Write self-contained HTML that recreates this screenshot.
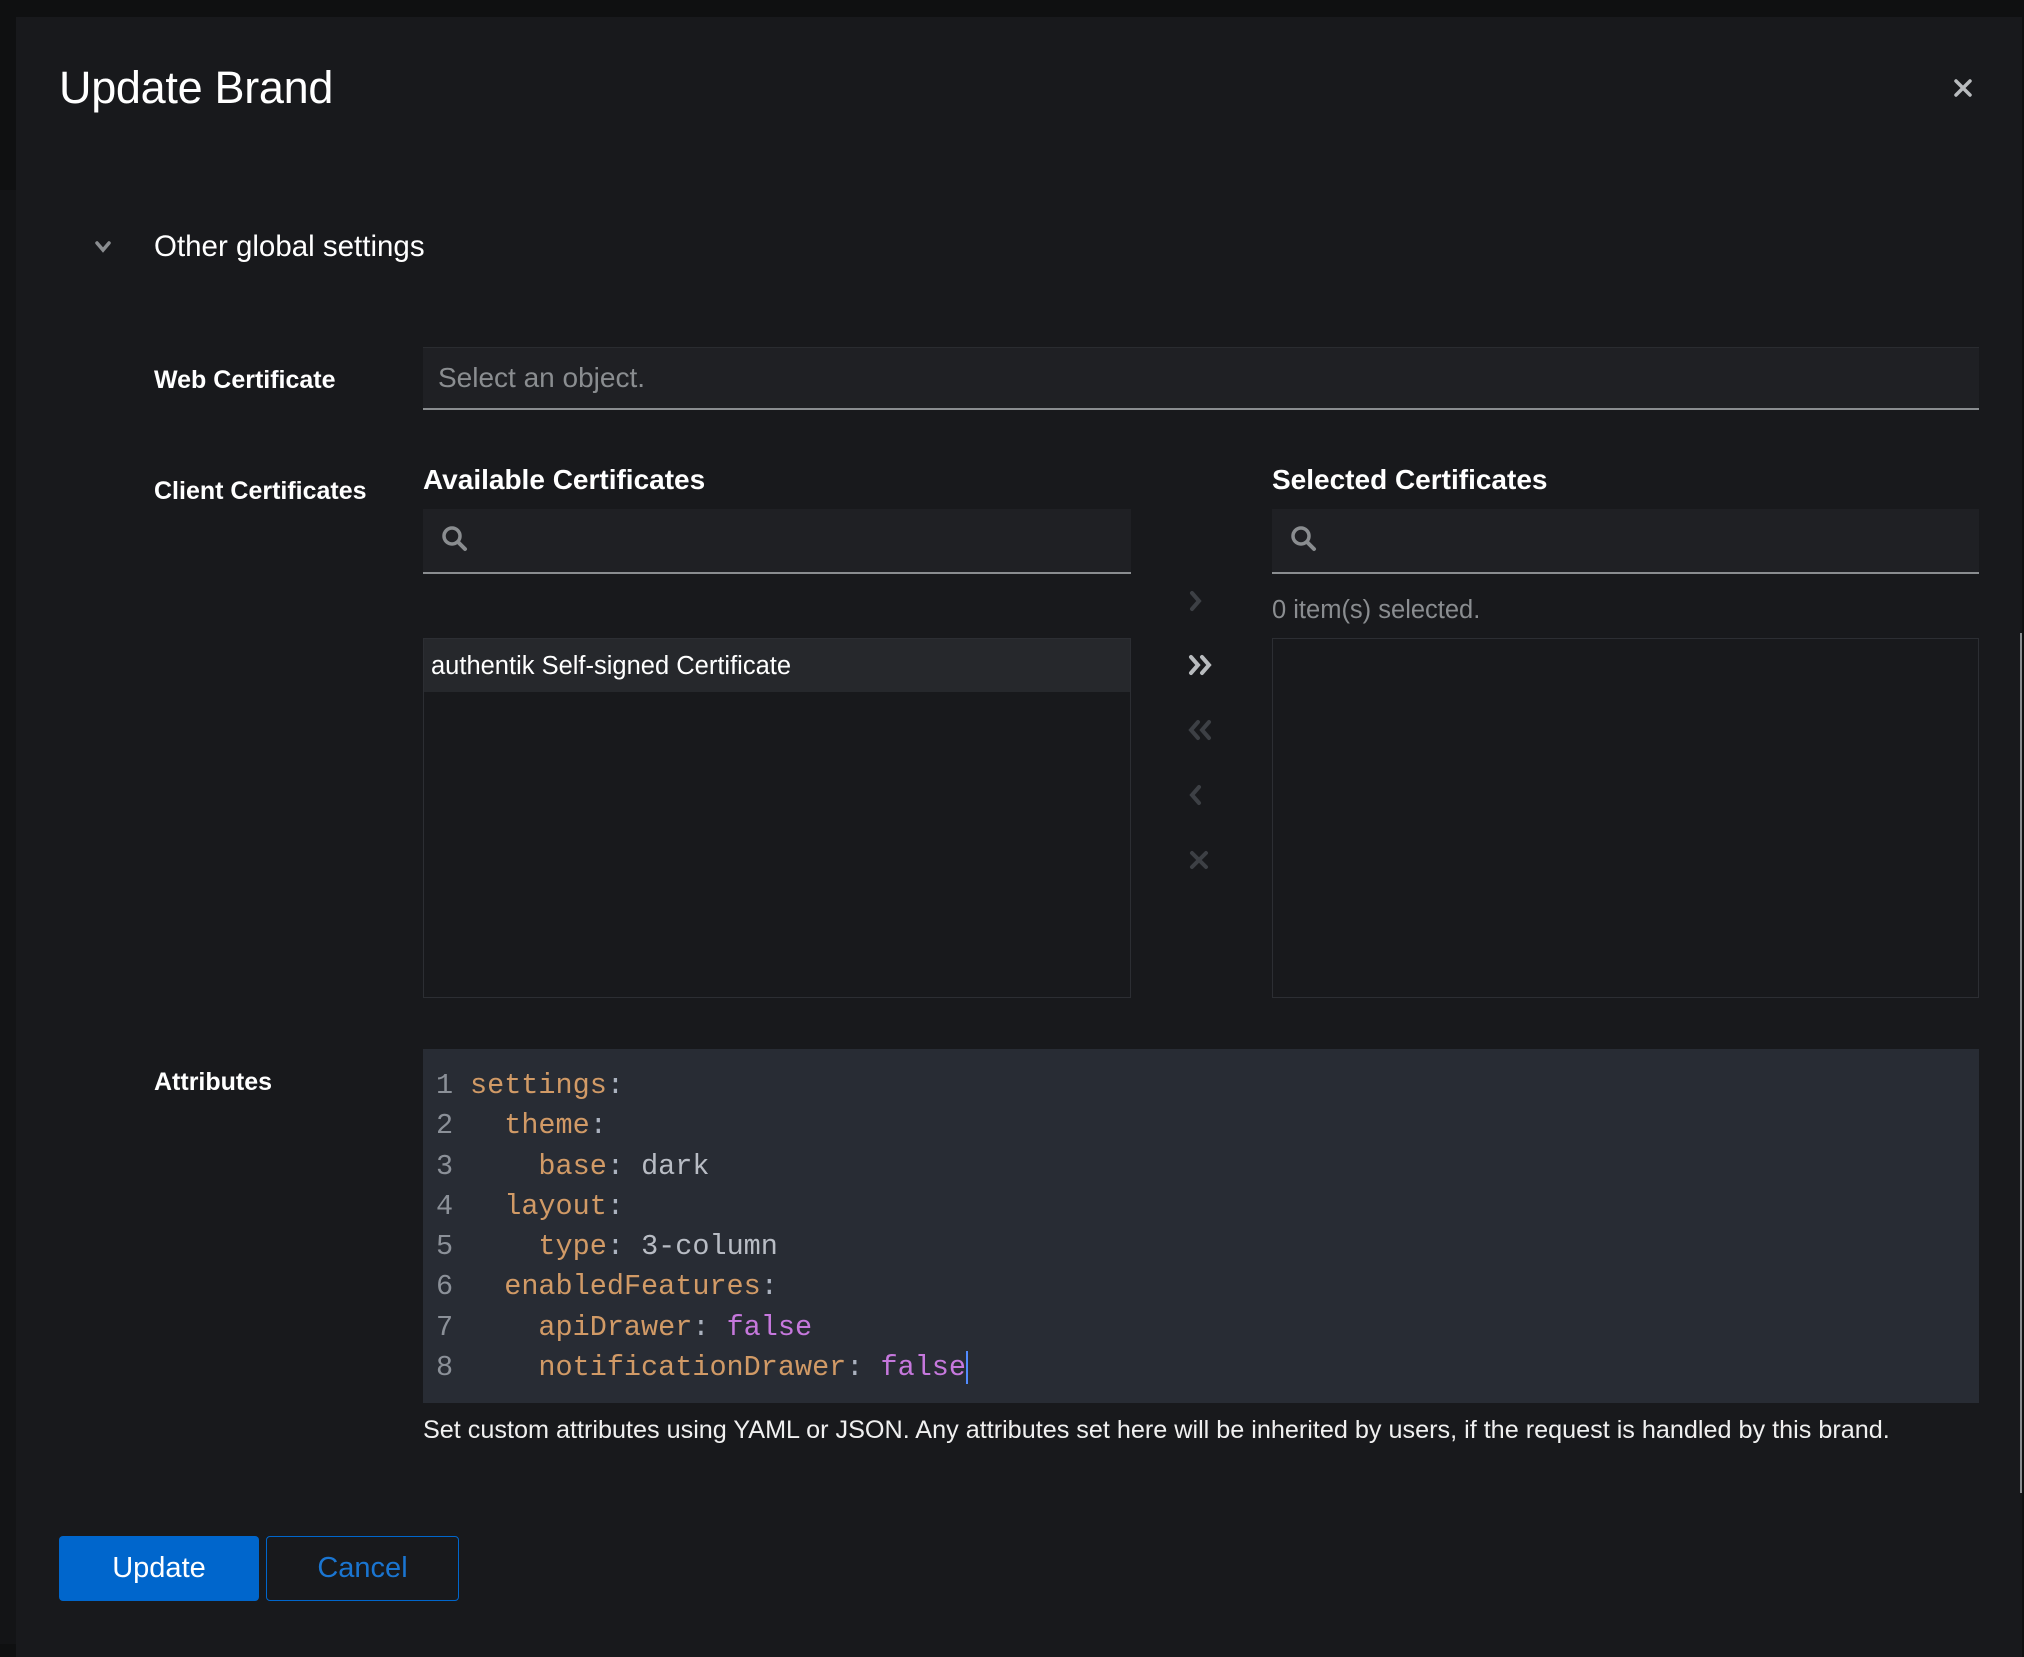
<!DOCTYPE html>
<html><head><meta charset="utf-8"><style>
*{box-sizing:border-box;margin:0;padding:0}
body{width:2024px;height:1644px;background:#0f1011;font-family:"Liberation Sans",sans-serif;color:#fff;position:relative;overflow:hidden}
.modal{position:absolute;left:16px;top:17px;width:2006px;height:1640px;background:#18191c}
.abs{position:absolute}
.lbl{font-weight:bold;font-size:25px;color:#fff}
.input{background:#1f2024;border-bottom:2px solid #8a8d90}
.list{border:1px solid #2c2e33;background:#18191c}
.code{background:#282c34;font-family:"Liberation Mono",monospace;font-size:28.5px;line-height:40.3px}
.k{color:#d19a66}.p{color:#abb2bf}.v{color:#b8bcc4}.f{color:#c678dd}.n{color:#8b9098;display:inline-block;width:34px}
</style></head><body>
<div class="abs" style="left:0;top:190px;width:16px;height:1454px;background:#131416"></div>
<div class="modal"></div>
<div class="abs" style="left:59px;top:62px;font-size:45px;font-weight:500;letter-spacing:-0.3px">Update Brand</div>
<svg class="abs" style="left:1953px;top:78px" width="20" height="20" viewBox="0 0 20 20"><path d="M3 3L17 17M17 3L3 17" stroke="#b8bbbe" stroke-width="3.5" stroke-linecap="round"/></svg>
<svg class="abs" style="left:94px;top:240px" width="18" height="14" viewBox="0 0 18 14"><path d="M3 3L9 10L15 3" stroke="#8a8d90" stroke-width="3.5" fill="none" stroke-linecap="round"/></svg>
<div class="abs" style="left:154px;top:230px;font-size:29.5px">Other global settings</div>
<div class="abs lbl" style="left:154px;top:366px">Web Certificate</div>
<div class="abs input" style="left:423px;top:347px;width:1556px;height:63px;border-top:1px solid #2a2c30"></div>
<div class="abs" style="left:438px;top:362px;font-size:28px;color:#8a8d90">Select an object.</div>
<div class="abs lbl" style="left:154px;top:477px">Client Certificates</div>
<div class="abs" style="left:423px;top:464px;font-size:28px;font-weight:bold">Available Certificates</div>
<div class="abs" style="left:1272px;top:464px;font-size:28px;font-weight:bold">Selected Certificates</div>
<div class="abs input" style="left:423px;top:509px;width:708px;height:65px"></div>
<div class="abs input" style="left:1272px;top:509px;width:707px;height:65px"></div>
<svg class="abs" style="left:441px;top:525px" width="28" height="28" viewBox="0 0 28 28"><circle cx="11" cy="11" r="8" stroke="#8a8d90" stroke-width="3.5" fill="none"/><path d="M17 17L24 24" stroke="#8a8d90" stroke-width="4" stroke-linecap="round"/></svg>
<svg class="abs" style="left:1290px;top:525px" width="28" height="28" viewBox="0 0 28 28"><circle cx="11" cy="11" r="8" stroke="#8a8d90" stroke-width="3.5" fill="none"/><path d="M17 17L24 24" stroke="#8a8d90" stroke-width="4" stroke-linecap="round"/></svg>
<div class="abs" style="left:1272px;top:596px;font-size:25.5px;color:#8a8d90">0 item(s) selected.</div>
<div class="abs list" style="left:423px;top:638px;width:708px;height:360px"></div>
<div class="abs" style="left:424px;top:639px;width:706px;height:53px;background:#26282c"></div>
<div class="abs" style="left:431px;top:652px;font-size:25.5px">authentik Self-signed Certificate</div>
<div class="abs list" style="left:1272px;top:638px;width:707px;height:360px"></div>
<svg class="abs" style="left:1182px;top:585px" width="40" height="290" viewBox="0 0 40 290">
<path d="M10 8L17 16L10 24" stroke="#3d4045" stroke-width="4" fill="none" stroke-linecap="round"/>
<path d="M9 72L16 80L9 88M20 72L27 80L20 88" stroke="#b8bbbe" stroke-width="4" fill="none" stroke-linecap="round"/>
<path d="M16 137L9 145L16 153M27 137L20 145L27 153" stroke="#3d4045" stroke-width="4" fill="none" stroke-linecap="round"/>
<path d="M17 202L10 210L17 218" stroke="#3d4045" stroke-width="4" fill="none" stroke-linecap="round"/>
<path d="M10 268L24 282M24 268L10 282" stroke="#3d4045" stroke-width="4" stroke-linecap="round"/>
</svg>
<div class="abs lbl" style="left:154px;top:1068px">Attributes</div>
<div class="abs code" style="left:423px;top:1049px;width:1556px;height:354px;padding:17px 0 0 13px;white-space:pre"><div><span class="n">1</span><span class="k">settings</span><span class="p">:</span></div><div><span class="n">2</span>  <span class="k">theme</span><span class="p">:</span></div><div><span class="n">3</span>    <span class="k">base</span><span class="p">:</span> <span class="v">dark</span></div><div><span class="n">4</span>  <span class="k">layout</span><span class="p">:</span></div><div><span class="n">5</span>    <span class="k">type</span><span class="p">:</span> <span class="v">3-column</span></div><div><span class="n">6</span>  <span class="k">enabledFeatures</span><span class="p">:</span></div><div><span class="n">7</span>    <span class="k">apiDrawer</span><span class="p">:</span> <span class="f">false</span></div><div><span class="n">8</span>    <span class="k">notificationDrawer</span><span class="p">:</span> <span class="f">false</span><span style="border-left:2px solid #528bff"></span></div></div>
<div class="abs" style="left:423px;top:1416px;font-size:25.2px;color:#f0f0f0">Set custom attributes using YAML or JSON. Any attributes set here will be inherited by users, if the request is handled by this brand.</div>
<div class="abs" style="left:59px;top:1536px;width:200px;height:65px;background:#0066cc;border-radius:4px;font-size:29px;text-align:center;line-height:65px">Update</div>
<div class="abs" style="left:266px;top:1536px;width:193px;height:65px;border:1.5px solid #0066cc;border-radius:4px;font-size:29px;text-align:center;line-height:62px;color:#1a75d1">Cancel</div>
<div class="abs" style="left:2020px;top:633px;width:2px;height:860px;background:#8a8d90"></div>
</body></html>
